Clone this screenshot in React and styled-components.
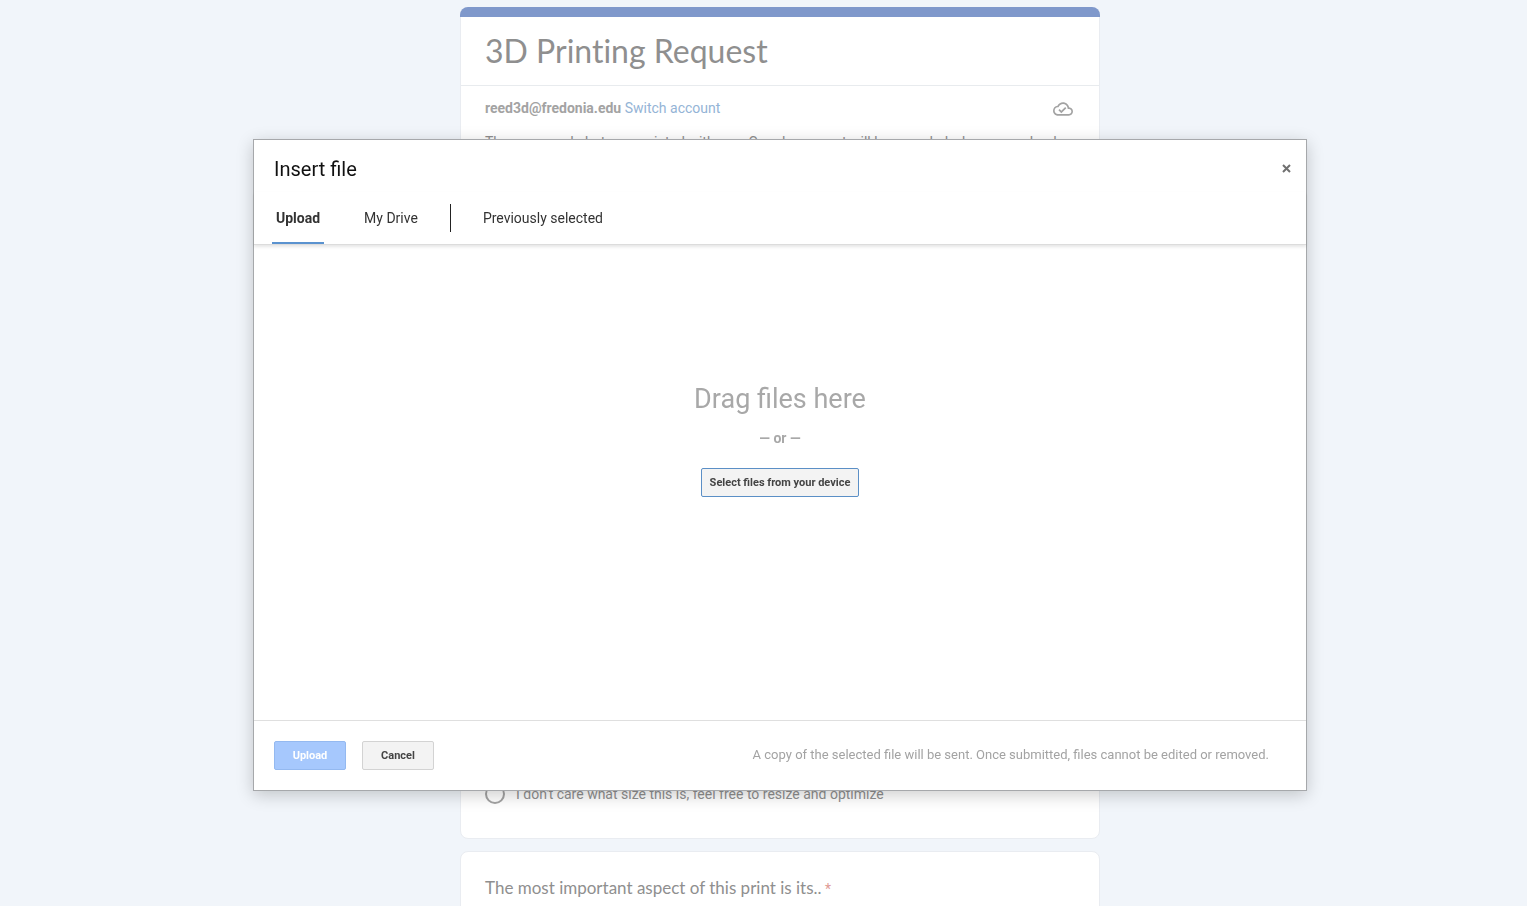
import styled, { createGlobalStyle } from "styled-components";

const sizes = [
  "The size is already correct in the file",
  "I will write the size in the comments",
  "I don't care what size this is, feel free to resize and optimize",
];

export default function App() {
  return (
    <>
      <GlobalStyle />
      <Page>
        <Column>
          <Card as="header">
            <Accent />
            <Title>3D Printing Request</Title>
            <Account>
              <p>
                <b>reed3d@fredonia.edu</b> <a href="#switch">Switch account</a>
              </p>
              <CloudIcon />
            </Account>
            <Description>
              The name and photo associated with your Google account will be recorded when you upload
              files and submit this form.
            </Description>
          </Card>
          <Card>
            <Question>What size should this be printed at?</Question>
            <Options>
              {sizes.map((size) => (
                <Option key={size}>
                  <input type="radio" name="size" />
                  {size}
                </Option>
              ))}
            </Options>
          </Card>
          <Card>
            <Question>
              The most important aspect of this print is its..<span> *</span>
            </Question>
          </Card>
        </Column>
      </Page>
      <Overlay>
        <Dialog role="dialog" aria-labelledby="dialog-title">
          <DialogHeader>
            <h2 id="dialog-title">Insert file</h2>
            <CloseButton aria-label="Close">
              <svg width="9" height="9" viewBox="0 0 9 9">
                <path d="M1 1L8 8M8 1L1 8" stroke="#707070" strokeWidth="2" />
              </svg>
            </CloseButton>
          </DialogHeader>
          <Tabs>
            <Tab $active>Upload</Tab>
            <Tab>My Drive</Tab>
            <Divider />
            <Tab>Previously selected</Tab>
          </Tabs>
          <DropZone>
            <h3>Drag files here</h3>
            <p>— or —</p>
            <Button $kind="outline">Select files from your device</Button>
          </DropZone>
          <DialogFooter>
            <Button $kind="primary" disabled>Upload</Button>
            <Button>Cancel</Button>
            <p>A copy of the selected file will be sent. Once submitted, files cannot be edited or removed.</p>
          </DialogFooter>
        </Dialog>
      </Overlay>
    </>
  );
}

function CloudIcon() {
  return (
    <svg width="20" height="20" viewBox="0 0 24 24" fill="#a3a3a3" aria-hidden="true">
      <path d="M19.35 10.04C18.67 6.59 15.64 4 12 4 9.11 4 6.61 5.64 5.36 8.04 2.35 8.36 0 10.9 0 14c0 3.31 2.69 6 6 6h13c2.76 0 5-2.24 5-5 0-2.64-2.05-4.78-4.65-4.96zM19 18H6c-2.21 0-4-1.79-4-4 0-2.05 1.53-3.76 3.56-3.97l1.07-.11.5-.95C8.08 7.14 9.94 6 12 6c2.62 0 4.88 1.86 5.39 4.43l.3 1.5 1.53.11c1.56.1 2.78 1.41 2.78 2.96 0 1.65-1.35 3-3 3zm-9-3.82l-2.09-2.09L6.5 13.5 10 17l6.01-6.01-1.41-1.41z" />
    </svg>
  );
}

const GlobalStyle = createGlobalStyle`
  * {
    box-sizing: border-box;
  }
  body {
    margin: 0;
    background: #f1f5fa;
    font-family: Roboto, Arial, sans-serif;
    font-size: 14px;
    line-height: 20px;
  }
  h1, h2, h3, p {
    margin: 0;
    font-weight: 400;
  }
  button {
    font-family: inherit;
  }
`;

const Page = styled.main`
  height: 100vh;
  overflow: hidden;
  padding: 7px 0 0 33px;
  color: #8f8f8f;
`;

const Column = styled.div`
  width: 100%;
  max-width: 640px;
  min-height: 100%;
  margin: 0 auto;
  display: flex;
  flex-direction: column;
  gap: 12px;
`;

const Card = styled.section`
  border: 1px solid #e9ecf1;
  border-radius: 8px;
  background: #fff;
`;

const Accent = styled.div`
  height: 10px;
  margin: -1px -1px 0;
  border-radius: 8px 8px 0 0;
  background: #7f98cb;
`;

const Title = styled.h1`
  padding: 14px 24px;
  border-bottom: 1px solid #e8ebee;
  font-family: Lato, sans-serif;
  font-size: 32px;
  font-variant-ligatures: none;
  line-height: 40px;
`;

const Account = styled.div`
  display: flex;
  align-items: flex-end;
  justify-content: space-between;
  padding: 12px 26px 0 24px;
  color: #a3a3a3;

  p {
    padding-bottom: 1px;
  }
  a {
    color: #94b4d6;
    text-decoration: none;
  }
`;

const Description = styled.p`
  min-height: 499px;
  padding: 13px 24px 0;
`;

const Question = styled.h2`
  padding: 24px;
  font-family: Lato, sans-serif;
  font-size: 17px;
  font-variant-ligatures: none;
  line-height: 24px;

  span {
    color: #e09a95;
    font-family: Roboto, sans-serif;
    font-size: 14px;
  }
`;

const Options = styled.div`
  display: flex;
  flex-direction: column;
  gap: 20px;
  padding-bottom: 34px;
`;

const Option = styled.label`
  display: flex;
  align-items: center;
  gap: 11px;
  padding: 0 24px;

  input {
    appearance: none;
    width: 20px;
    height: 20px;
    margin: 0;
    border: 2px solid #a3a3a3;
    border-radius: 50%;
  }
`;

const Overlay = styled.div`
  position: fixed;
  inset: 0;
  padding: 139px 0 0 33px;
`;

const Dialog = styled.div`
  width: 100%;
  max-width: 1054px;
  margin: 0 auto;
  border: 1px solid #a6a8ab;
  background: #fff;
  box-shadow: 0 4px 16px rgba(0, 0, 0, 0.2);
`;

const DialogHeader = styled.div`
  display: flex;
  align-items: flex-start;
  justify-content: space-between;
  padding: 16px 12px 10px 20px;

  h2 {
    color: #111;
    font-size: 20px;
    line-height: 26px;
  }
`;

const CloseButton = styled.button`
  display: flex;
  padding: 8px 3px;
  border: 0;
  background: none;
`;

const Tabs = styled.div`
  display: flex;
  align-items: center;
  padding-left: 18px;
  border-bottom: 1px solid #dcdcdc;
  box-shadow: 0 2px 3px rgba(0, 0, 0, 0.1);
`;

const Tab = styled.button`
  height: 52px;
  margin-right: 36px;
  padding: 2px 4px 0;
  border: 0;
  border-bottom: 2px solid ${({ $active }) => ($active ? "#5a92cf" : "transparent")};
  background: none;
  color: #333;
  font-size: 14px;
  font-weight: ${({ $active }) => ($active ? 700 : 400)};
`;

const Divider = styled.span`
  width: 1px;
  height: 28px;
  margin: 0 28px 0 -8px;
  background: #222;
`;

const DropZone = styled.div`
  display: flex;
  flex-direction: column;
  align-items: center;
  min-height: 475px;
  padding-top: 137px;
  color: #a8a8a8;

  h3 {
    font-size: 27px;
    line-height: 34px;
  }
  p {
    margin: 12px 0 20px;
    font-weight: 700;
  }
`;

const kinds = {
  primary: "border-color: #94b9f0; background: #a6c8fd; color: #fff;",
  outline: "border-color: #5b8fc6;",
};

const Button = styled.button`
  height: 29px;
  min-width: 72px;
  padding: 0 8px;
  border: 1px solid #d3d3d3;
  border-radius: 2px;
  background: #f3f3f3;
  color: #444;
  font-size: 11px;
  font-weight: 700;
  ${({ $kind }) => kinds[$kind]}
`;

const DialogFooter = styled.div`
  display: flex;
  align-items: center;
  gap: 16px;
  padding: 20px 37px 20px 20px;
  border-top: 1px solid #dfdfdf;

  p {
    margin-left: auto;
    padding-bottom: 2px;
    color: #a3a3a3;
    font-size: 13px;
  }
`;
